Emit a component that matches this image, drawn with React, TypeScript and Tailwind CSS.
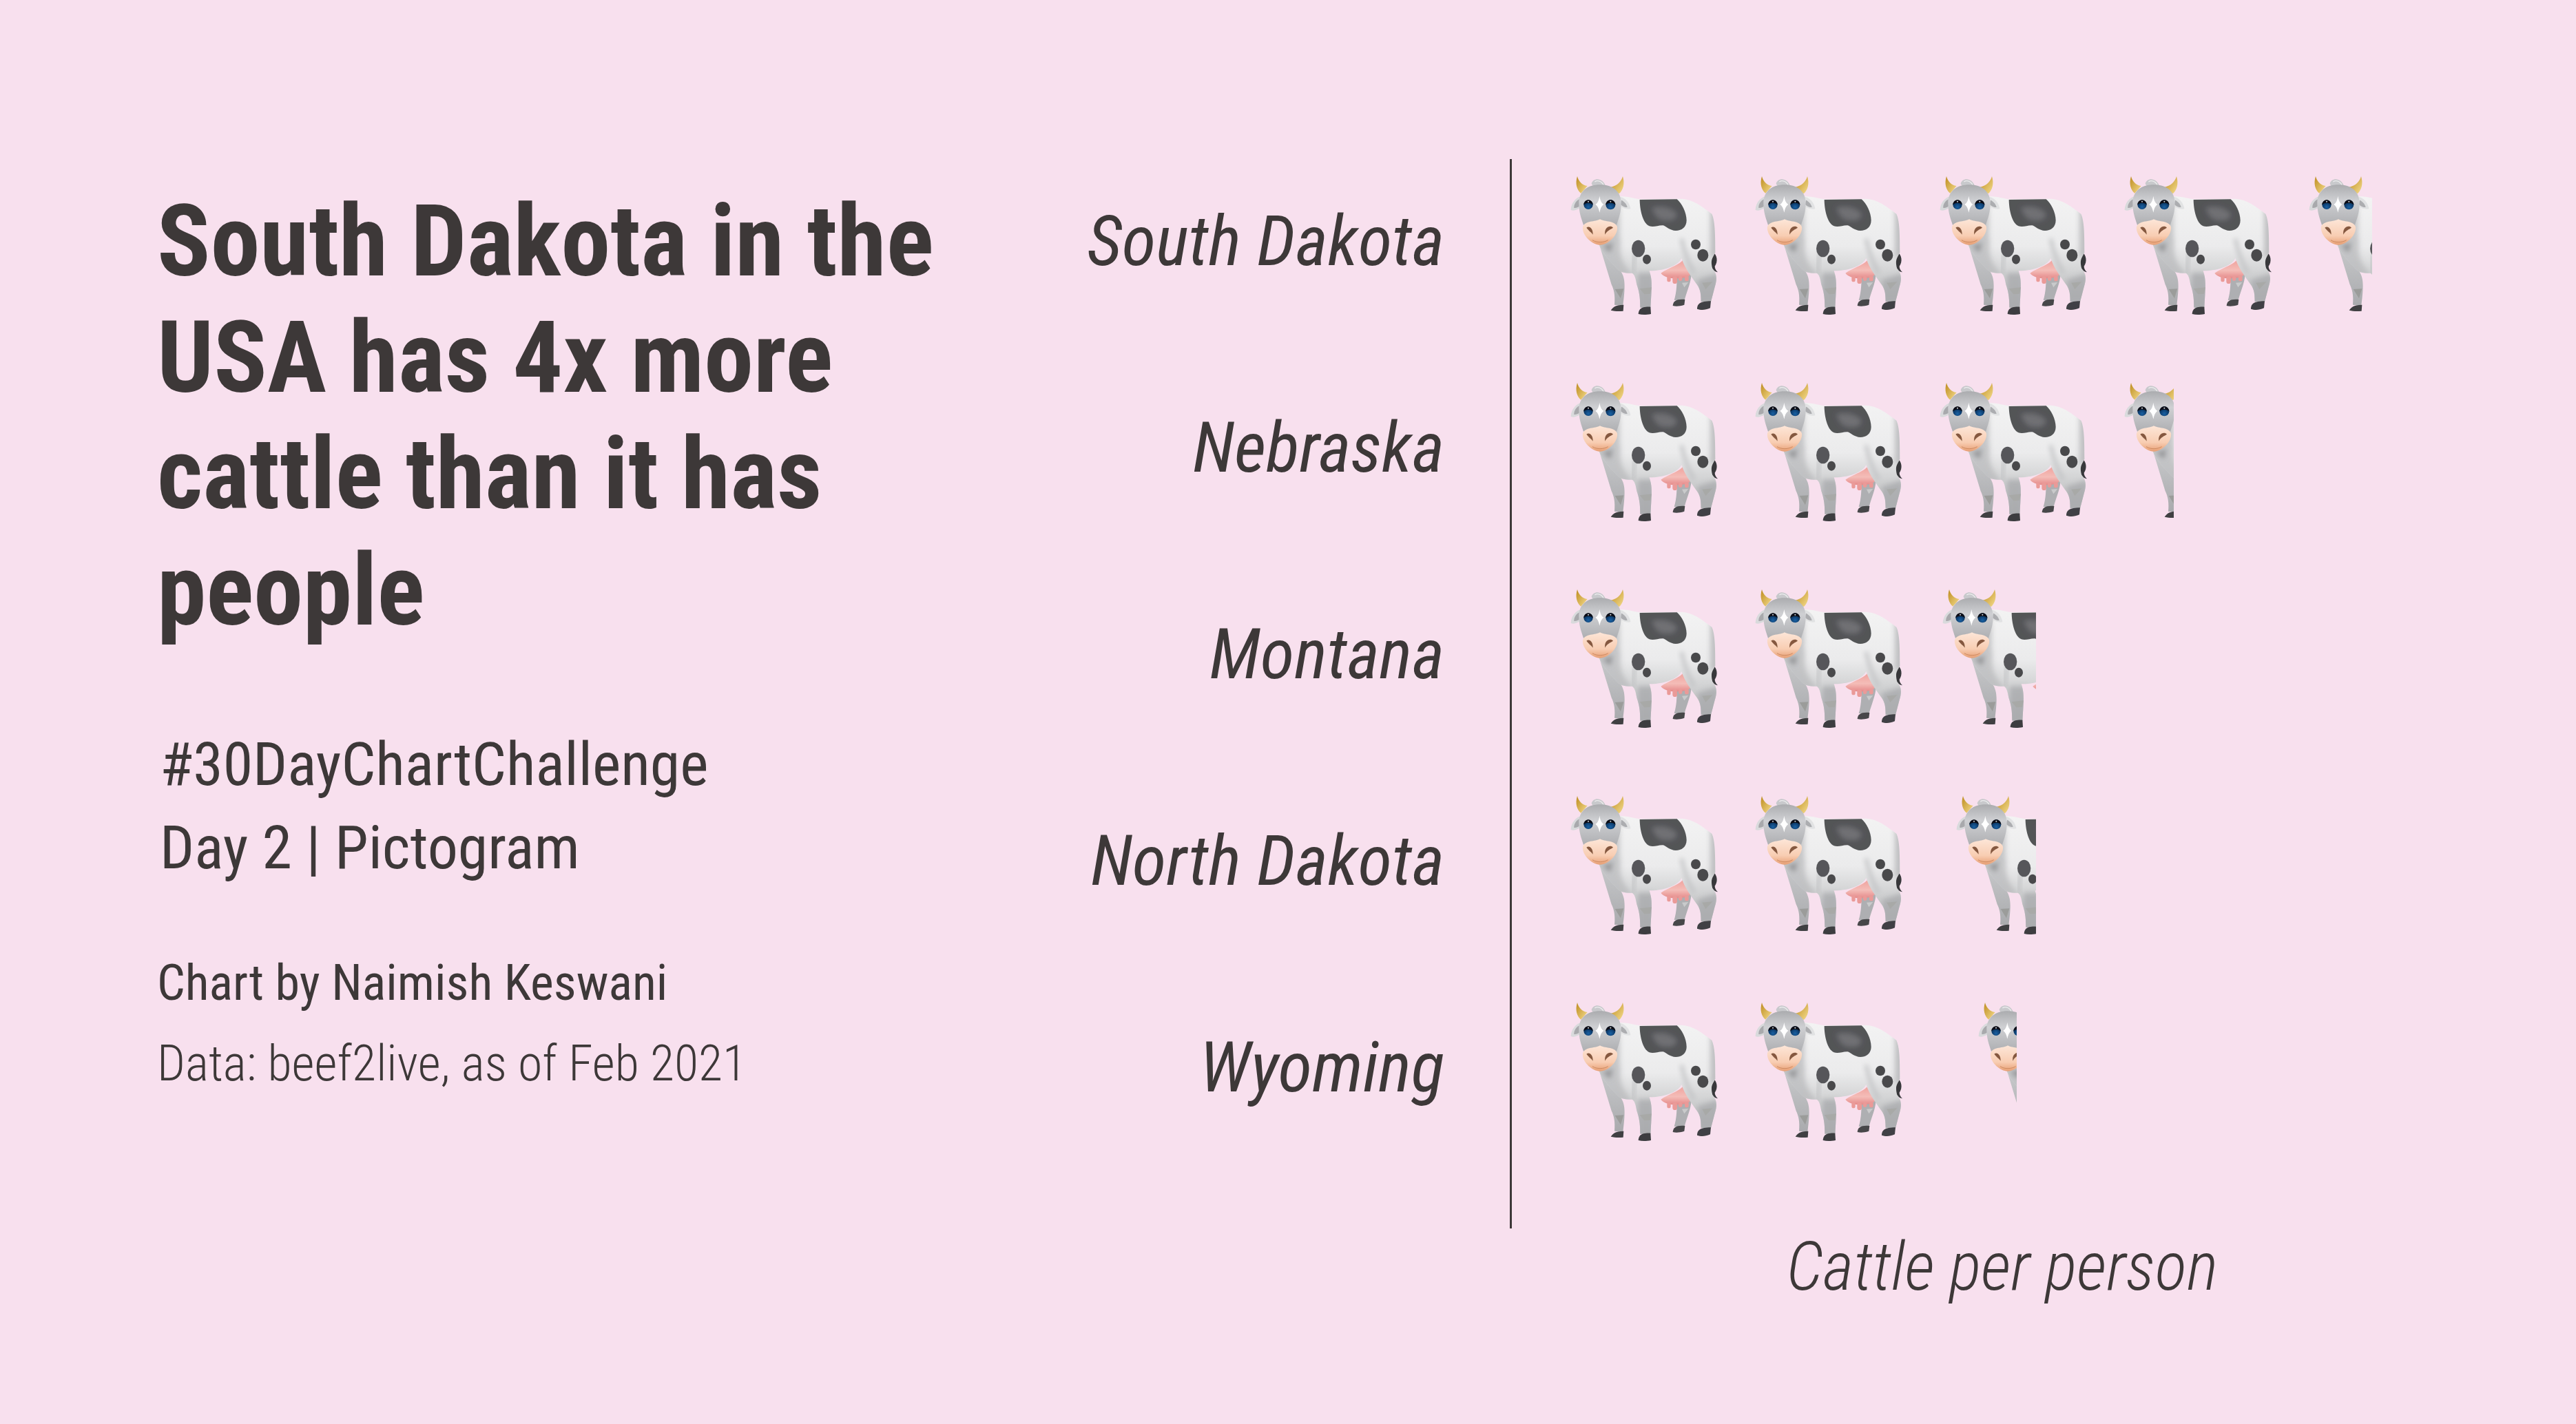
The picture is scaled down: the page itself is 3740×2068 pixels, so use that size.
const rows = [
  { state: 'South Dakota', whole: 4, offset: 0, clip: 104 },
  { state: 'Nebraska', whole: 3, offset: 0, clip: 84 },
  { state: 'Montana', whole: 2, offset: 4, clip: 148 },
  { state: 'North Dakota', whole: 2, offset: 24, clip: 128 },
  { state: 'Wyoming', whole: 2, offset: 56, clip: 68 },
];

const bodyPath =
  'M340 195 C380 195 410 208 440 208 L610 206 C660 208 700 240 742 272 C755 300 757 350 757 440 C745 465 735 470 745 510 C762 530 768 550 755 590 L738 655 L695 655 C695 610 690 595 670 570 C650 540 625 510 610 465 C600 490 550 520 470 520 C482 560 482 570 475 680 L430 680 C430 630 425 610 415 580 C410 550 405 535 395 530 C360 530 340 528 320 500 C290 470 260 430 250 405 L250 300 Z';

// drawn in 3x units, then cropped to one 268px column
function Cow() {
  return (
    <svg viewBox="90 0 804 780" className="block h-[260px] w-[268px] shrink-0">
      <defs>
        <linearGradient id="hide" x1="0" y1="0" x2="0" y2="1">
          <stop offset="0" stopColor="#f3f3f3" />
          <stop offset="0.45" stopColor="#ebebec" />
          <stop offset="0.7" stopColor="#d0d1d2" />
          <stop offset="1" stopColor="#afb0b2" />
        </linearGradient>
        <linearGradient id="leg" x1="0" y1="0" x2="0" y2="1">
          <stop offset="0" stopColor="#c9cacc" />
          <stop offset="1" stopColor="#a9aaad" />
        </linearGradient>
        <linearGradient id="head" x1="0" y1="0" x2="0" y2="1">
          <stop offset="0" stopColor="#abacaf" />
          <stop offset="0.4" stopColor="#cfd0d3" />
          <stop offset="1" stopColor="#aeafb2" />
        </linearGradient>
        <linearGradient id="horn" x1="0" y1="0" x2="1" y2="1">
          <stop offset="0" stopColor="#bd8c1f" />
          <stop offset="1" stopColor="#f5dd8f" />
        </linearGradient>
        <linearGradient id="snout" x1="0" y1="0" x2="0" y2="1">
          <stop offset="0" stopColor="#fde6d8" />
          <stop offset="0.65" stopColor="#f8cdb2" />
          <stop offset="1" stopColor="#e79f74" />
        </linearGradient>
        <linearGradient id="udder" x1="0" y1="0" x2="0" y2="1">
          <stop offset="0" stopColor="#ef9d98" />
          <stop offset="0.6" stopColor="#f4bdb8" />
          <stop offset="1" stopColor="#e58a8a" />
        </linearGradient>
        <radialGradient id="eye" cx="0.5" cy="0.75" r="0.6">
          <stop offset="0" stopColor="#1a62a4" />
          <stop offset="1" stopColor="#082c55" />
        </radialGradient>
        <filter id="soft" x="-40%" y="-40%" width="180%" height="180%">
          <feGaussianBlur stdDeviation="11" />
        </filter>
        <filter id="edge" x="-5%" y="-5%" width="110%" height="110%">
          <feGaussianBlur stdDeviation="1.6" />
        </filter>
        <clipPath id="bodyclip">
          <path d={bodyPath} />
        </clipPath>
      </defs>
      <g filter="url(#edge)">
        {/* far legs */}
        <path d="M590 520 L652 525 C655 560 640 590 622 650 L578 648 C590 610 590 570 590 520Z" fill="#aeafb2" />
        <path d="M612 572 L640 570 L622 592Z" fill="#c9cacb" />
        <path d="M572 672 C574 650 590 642 625 645 L622 668 C600 675 585 675 572 672Z" fill="#46474a" />
        <path d="M250 400 L345 520 C362 550 368 570 355 672 L318 668 C322 625 315 600 305 580Z" fill="url(#leg)" />
        <path d="M320 600 L358 598 L345 640Z" fill="#9b9c9a" />
        <path d="M302 692 C312 680 318 668 358 668 L356 695 C335 697 318 696 302 692Z" fill="#3f4043" />
        {/* udder */}
        <path d="M520 530 C555 505 605 495 622 465 L655 525 C650 540 635 552 600 552 C570 555 535 550 520 530Z" fill="url(#udder)" />
        <rect x="547" y="542" width="16" height="26" rx="8" fill="#ea9a98" />
        <rect x="571" y="544" width="20" height="32" rx="10" fill="#ea9a98" />
        <rect x="597" y="542" width="16" height="22" rx="8" fill="#ea9a98" />
        <rect x="624" y="540" width="17" height="25" rx="8" fill="#ea9a98" />
        {/* tail */}
        <path d="M748 440 C765 450 770 480 755 500 C755 510 760 518 768 526 C748 522 738 505 736 482 C736 465 740 450 748 440Z" fill="#37383b" />
        {/* body and near legs */}
        <path d={bodyPath} fill="url(#hide)" />
        <g clipPath="url(#bodyclip)">
          <path d="M330 190 C350 260 335 330 345 400 C340 450 350 490 400 540 L240 540 L240 190Z" fill="#b9babc" opacity="0.75" filter="url(#soft)" />
          <path d="M735 250 L790 250 L790 460 L735 460Z" fill="#b5b6b8" opacity="0.8" filter="url(#soft)" />
          <path d="M610 380 C618 420 630 470 665 530" stroke="#c0c1c3" strokeWidth="14" fill="none" filter="url(#soft)" />
          <path d="M410 440 C400 480 395 510 400 535" stroke="#c0c1c3" strokeWidth="14" fill="none" filter="url(#soft)" />
          <path d="M420 530 L490 530 L490 690 L420 690Z" fill="#a9aaad" opacity="0.8" filter="url(#soft)" />
          <path d="M680 560 L770 530 L770 660 L680 660Z" fill="#a9aaad" opacity="0.8" filter="url(#soft)" />
          <path d="M255 400 C285 420 300 400 310 390 L300 440Z" fill="#8f9092" filter="url(#soft)" />
        </g>
        <path d="M428 598 L480 592 L474 620 L448 622Z" fill="#a8a9a7" />
        <path d="M700 572 L745 568 L715 600Z" fill="#a8a9a7" />
        <path d="M678 686 C678 665 690 652 738 652 L735 682 C712 692 695 692 678 686Z" fill="#404144" />
        <path d="M422 708 C424 690 430 675 475 677 L477 708 C455 712 438 712 422 708Z" fill="#3c3d40" />
        {/* spots */}
        <path d="M428 210 L590 208 C610 225 632 265 632 300 C632 330 610 345 585 345 C560 345 540 325 530 322 C510 320 490 332 470 325 C440 312 428 250 428 210Z" fill="#535457" />
        <path d="M480 245 C520 235 560 240 590 270 C590 300 560 305 530 300 C500 295 490 270 480 245Z" fill="#6f7073" filter="url(#soft)" />
        <ellipse cx="422" cy="423" rx="29" ry="37" fill="#56575a" />
        <ellipse cx="459" cy="470" rx="18" ry="21" fill="#48494c" />
        <ellipse cx="672" cy="405" rx="21" ry="22" fill="#48494c" />
        <ellipse cx="703" cy="452" rx="24" ry="27" fill="#48494c" />
        {/* horns and tuft */}
        <path d="M156 108 C146 140 154 168 172 182 L200 150 C178 148 162 130 156 108Z" fill="url(#horn)" />
        <path d="M354 108 C364 140 356 168 338 184 L302 155 C330 150 348 130 354 108Z" fill="url(#horn)" />
        <path d="M218 140 C226 112 268 114 280 152 L225 152Z" fill="#c8c9cc" />
        <path d="M232 132 C244 124 262 128 270 146" stroke="#eeeeef" strokeWidth="4" fill="none" />
        {/* ears */}
        <path d="M172 195 C150 200 128 225 128 255 C145 262 165 250 180 235Z" fill="#d9dadc" />
        <path d="M166 208 C150 215 140 232 142 246 C155 248 165 240 172 232Z" fill="#a8a9ac" />
        <path d="M340 198 C365 200 385 225 388 250 C370 255 350 245 338 235Z" fill="#e1e2e3" />
        <path d="M348 212 C362 218 372 232 374 243 C362 244 350 236 344 230Z" fill="#acadb0" />
        {/* head */}
        <path d="M255 145 C312 145 347 175 347 225 C347 265 337 290 327 320 L183 320 C173 290 163 265 163 225 C163 175 198 145 255 145Z" fill="url(#head)" />
        <path d="M253 194 C256 215 262 225 271 230 C262 236 256 248 253 266 C250 248 244 236 235 230 C244 225 250 215 253 194Z" fill="#ffffff" />
        <circle cx="204" cy="232" r="20" fill="url(#eye)" />
        <circle cx="301" cy="232" r="21" fill="url(#eye)" />
        <path d="M184 232 C187 204 221 204 224 232 C212 222 196 222 184 232Z" fill="#0e1118" />
        <path d="M280 232 C283 204 319 204 322 232 C309 222 293 222 280 232Z" fill="#0e1118" />
        <circle cx="204" cy="218" r="3" fill="#cfd5dc" />
        <circle cx="301" cy="218" r="3" fill="#cfd5dc" />
        {/* snout */}
        <path d="M255 295 C275 308 320 300 330 328 C335 365 290 407 255 407 C220 407 175 365 180 328 C190 300 235 308 255 295Z" fill="url(#snout)" />
        <path d="M196 332 C208 322 225 335 224 362 C215 350 205 345 196 332Z" fill="#85593f" />
        <path d="M312 332 C300 318 272 330 277 362 C285 345 300 340 312 332Z" fill="#85593f" />
        <path d="M222 386 C240 398 270 398 290 386" stroke="#cf8a60" strokeWidth="3" fill="none" />
      </g>
    </svg>
  );
}

function CowRow({ whole, offset, clip }: { whole: number; offset: number; clip: number }) {
  return (
    <div className="flex h-[240px] items-center">
      {Array.from({ length: whole }).map((_, i) => (
        <Cow key={i} />
      ))}
      <div className="overflow-hidden" style={{ marginLeft: offset, width: clip }}>
        <Cow />
      </div>
    </div>
  );
}

export default function App() {
  return (
    <div className="flex h-[2068px] w-[3740px] bg-[#f8e0ee] font-['Roboto'] text-[#3d3838] [font-stretch:condensed]">
      <aside className="w-[1400px] pt-[266px] pl-[228px]">
        <h1 className="text-[144px] leading-[169px] font-bold">
          South Dakota in the
          <br />
          USA has 4x more
          <br />
          cattle than it has
          <br />
          people
        </h1>
        <div className="mt-[107px] pl-[4px] text-[88px] leading-[121px]">
          <p>#30DayChartChallenge</p>
          <p>Day 2 | Pictogram</p>
        </div>
        <p className="mt-[78px] text-[72px] leading-[117px]">Chart by Naimish Keswani</p>
        <p className="text-[72px] leading-[117px] font-light">Data: beef2live, as of Feb 2021</p>
      </aside>
      <main className="flex flex-col pt-[231px]">
        <div className="flex">
          <div className="flex w-[792px] flex-col gap-[60px] pr-[95px] text-right text-[101px] italic">
            {rows.map(r => (
              <div key={r.state} className="-mt-[1px] flex h-[241px] items-center justify-end">
                {r.state}
              </div>
            ))}
          </div>
          <div className="flex w-[1430px] flex-col gap-[60px] border-l-[3px] border-[#3d3838] pb-[113px] pl-[73px]">
            {rows.map(r => (
              <div key={r.state} className="-translate-y-[1px]">
                <CowRow whole={r.whole} offset={r.offset} clip={r.clip} />
              </div>
            ))}
          </div>
        </div>
        <p className="ml-[792px] w-[1430px] text-center text-[97px] leading-[112px] font-light italic">
          Cattle per person
        </p>
      </main>
    </div>
  );
}
